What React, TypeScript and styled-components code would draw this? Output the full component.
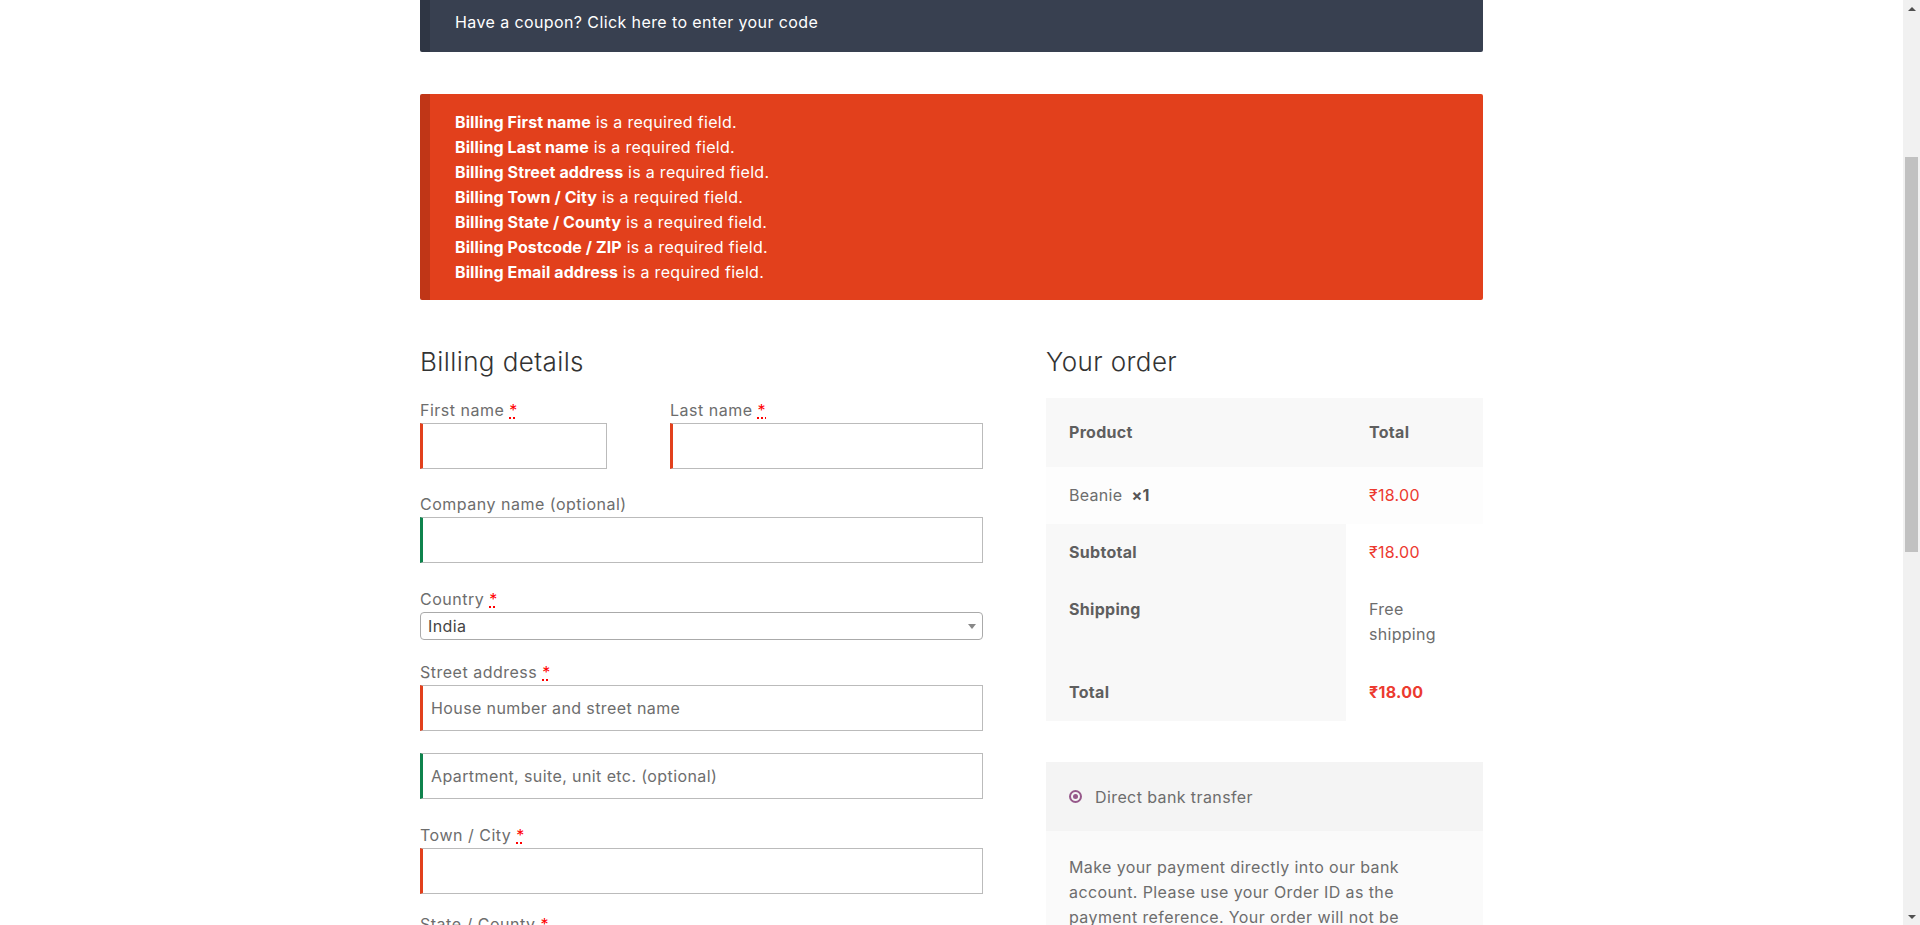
import React from "react";
import styled, { createGlobalStyle } from "styled-components";

const FONT = `"Inter", "Noto Sans", sans-serif`;

const Global = createGlobalStyle`
  html, body { margin: 0; padding: 0; height: 100%; overflow: hidden; background: #fff; }
  body { font-family: ${FONT}; color: #6d6d6d; -webkit-font-smoothing: antialiased; }
  * { box-sizing: border-box; }
`;

const Shell = styled.div`
  display: flex;
  height: 925px;
  overflow: hidden;
`;

const Viewport = styled.div`
  flex: 1;
  overflow: hidden;
`;

const Container = styled.div`
  width: 1063px;
  margin: 0 auto;
`;

const Notice = styled.div<{ $bg: string }>`
  background: ${(p) => p.$bg};
  border-left: 10px solid rgba(0, 0, 0, 0.15);
  border-radius: 0 0 2px 2px;
  color: #fff;
  font-size: 16px;
  letter-spacing: 0.4px;
  line-height: 25px;
  padding: 10px 25px 17px 25px;
`;

const ErrorNotice = styled(Notice)`
  margin-top: 42px;
  border-radius: 2px;
  padding: 16px 25px 15px 25px;
  letter-spacing: 0.3px;
`;

const ErrorLine = styled.div`
  b { font-weight: 700; letter-spacing: 0.1px; }
`;

const Columns = styled.div`
  display: grid;
  grid-template-columns: 563px 1fr;
  column-gap: 63px;
  margin-top: 45px;
`;

const Heading = styled.h3`
  margin: 0 0 19px 0;
  font-size: 26px;
  line-height: 34px;
  font-weight: 300;
  letter-spacing: 0.4px;
  color: #333;
`;

const Row = styled.div<{ $mb?: number }>`
  display: flex;
  flex-direction: column;
  margin-bottom: ${(p) => (p.$mb ?? 22)}px;
`;

const SplitRow = styled.div`
  display: grid;
  grid-template-columns: 187px 1fr;
  column-gap: 63px;
`;

const Label = styled.label`
  font-size: 16px;
  letter-spacing: 0.5px;
  line-height: 24px;
  color: #6d6d6d;
  margin-bottom: 1px;
`;

const Req = styled.abbr`
  color: #ff0000;
  margin-left: 5px;
  text-decoration: underline dotted;
  text-decoration-thickness: 2px;
  border: none;
  cursor: help;
`;

const Input = styled.input<{ $state: "invalid" | "valid" }>`
  width: 100%;
  height: 46px;
  border: 1px solid #bbb;
  border-left: 3px solid ${(p) => (p.$state === "invalid" ? "#e2401c" : "#0f834d")};
  padding: 0 8px;
  font-family: ${FONT};
  font-size: 16px;
  letter-spacing: 0.4px;
  color: #444;
  background: #fff;
  outline: none;
  &::placeholder { color: #6d6d6d; }
`;

const SelectBox = styled.div`
  position: relative;
  height: 28px;
  border: 1px solid #aaa;
  border-radius: 4px;
  padding-left: 7px;
  font-size: 16px;
  letter-spacing: 0.4px;
  line-height: 26px;
  color: #444;
  background: #fff;
  &::after {
    content: "";
    position: absolute;
    right: 6px;
    top: 11px;
    border-left: 4px solid transparent;
    border-right: 4px solid transparent;
    border-top: 5px solid #888;
  }
`;

const Table = styled.table`
  width: 100%;
  margin-top: 2px;
  border-collapse: collapse;
  font-size: 16px;
  letter-spacing: 0.3px;
  line-height: 25px;
`;

const Th = styled.th<{ $bg?: string; $pad?: string; $w?: string }>`
  text-align: left;
  font-weight: 700;
  color: #5f5f5f;
  background: ${(p) => p.$bg ?? "#f8f8f8"};
  padding: ${(p) => p.$pad ?? "16px 23px"};
  vertical-align: top;
  width: ${(p) => p.$w ?? "auto"};
`;

const Td = styled.td<{ $bg?: string; $pad?: string; $color?: string; $bold?: boolean }>`
  text-align: left;
  color: ${(p) => p.$color ?? "#6d6d6d"};
  font-weight: ${(p) => (p.$bold ? 700 : 400)};
  background: ${(p) => p.$bg ?? "#fff"};
  padding: ${(p) => p.$pad ?? "16px 23px"};
  vertical-align: top;
`;

const Qty = styled.strong`
  font-weight: 700;
  color: #555;
  margin-left: 9px;
`;

const Payment = styled.div`
  margin-top: 41px;
  background: #fafafa;
`;

const PaymentHead = styled.div`
  display: flex;
  align-items: center;
  gap: 13px;
  height: 69px;
  padding: 0 23px;
  background: #f4f4f4;
  font-size: 16px;
  letter-spacing: 0.4px;
  color: #6d6d6d;
`;

const Radio = styled.span`
  width: 13px;
  height: 13px;
  border-radius: 50%;
  border: 2px solid #96588a;
  display: flex;
  align-items: center;
  justify-content: center;
  &::after {
    content: "";
    width: 5px;
    height: 5px;
    border-radius: 50%;
    background: #96588a;
  }
`;

const PaymentDesc = styled.div`
  padding: 24px 23px;
  font-size: 16px;
  letter-spacing: 0.4px;
  line-height: 25px;
  color: #6d6d6d;
`;

const Scrollbar = styled.div`
  width: 17px;
  height: 925px;
  background: #f1f1f1;
  display: flex;
  flex-direction: column;
  align-items: center;
`;

const Arrow = styled.div<{ $dir: "up" | "down" }>`
  height: 17px;
  width: 17px;
  display: flex;
  align-items: center;
  justify-content: center;
  &::after {
    content: "";
    border-left: 4px solid transparent;
    border-right: 4px solid transparent;
    ${(p) => (p.$dir === "up" ? "border-bottom: 4px solid #505050;" : "border-top: 4px solid #505050;")}
  }
`;

const TrackGap = styled.div<{ $h?: number }>`
  ${(p) => (p.$h ? `height: ${p.$h}px;` : "flex: 1;")}
`;

const Thumb = styled.div`
  width: 13px;
  height: 395px;
  background: #c1c1c1;
`;

const Field = ({
  label,
  req,
  placeholder,
  state,
  mb,
}: {
  label?: string;
  req?: boolean;
  placeholder?: string;
  state: "invalid" | "valid";
  mb?: number;
}) => (
  <Row $mb={mb}>
    {label && (
      <Label>
        {label}
        {req && <Req title="required">*</Req>}
      </Label>
    )}
    <Input $state={state} placeholder={placeholder} />
  </Row>
);

const errors = [
  "First name",
  "Last name",
  "Street address",
  "Town / City",
  "State / County",
  "Postcode / ZIP",
  "Email address",
];

export default function App() {
  return (
    <>
      <Global />
      <Shell>
        <Viewport>
          <Container>
            <Notice $bg="#384050">Have a coupon? Click here to enter your code</Notice>
            <ErrorNotice $bg="#e2401c">
              {errors.map((e) => (
                <ErrorLine key={e}>
                  <b>Billing {e}</b> is a required field.
                </ErrorLine>
              ))}
            </ErrorNotice>
            <Columns>
              <div>
                <Heading>Billing details</Heading>
                <SplitRow>
                  <Field label="First name" req state="invalid" mb={23} />
                  <Field label="Last name" req state="invalid" mb={23} />
                </SplitRow>
                <Field label="Company name (optional)" state="valid" mb={24} />
                <Row $mb={20}>
                  <Label>
                    Country<Req title="required">*</Req>
                  </Label>
                  <SelectBox>India</SelectBox>
                </Row>
                <Field label="Street address" req placeholder="House number and street name" state="invalid" />
                <Field placeholder="Apartment, suite, unit etc. (optional)" state="valid" mb={24} />
                <Field label="Town / City" req state="invalid" mb={18} />
                <Field label="State / County" req state="invalid" />
                <Field label="Postcode / ZIP" req state="invalid" />
                <Field label="Phone (optional)" state="valid" />
                <Field label="Email address" req state="invalid" />
              </div>
              <div>
                <Heading>Your order</Heading>
                <Table>
                  <thead>
                    <tr>
                      <Th $pad="22px 23px" $w="300px">Product</Th>
                      <Th $pad="22px 23px">Total</Th>
                    </tr>
                  </thead>
                  <tbody>
                    <tr>
                      <Td $bg="#fdfdfd">
                        Beanie<Qty>×1</Qty>
                      </Td>
                      <Td $bg="#fdfdfd" $color="#ec3a30">₹18.00</Td>
                    </tr>
                  </tbody>
                  <tfoot>
                    <tr>
                      <Th $pad="16px 23px 15px">Subtotal</Th>
                      <Td $pad="16px 23px 15px" $color="#ec3a30">₹18.00</Td>
                    </tr>
                    <tr>
                      <Th $pad="17px 23px 16px">Shipping</Th>
                      <Td $pad="17px 23px 16px">
                        Free
                        <br />
                        shipping
                      </Td>
                    </tr>
                    <tr>
                      <Th $pad="17px 23px 16px">Total</Th>
                      <Td $pad="17px 23px 16px" $color="#ec3a30" $bold>₹18.00</Td>
                    </tr>
                  </tfoot>
                </Table>
                <Payment>
                  <PaymentHead>
                    <Radio />
                    Direct bank transfer
                  </PaymentHead>
                  <PaymentDesc>
                    Make your payment directly into our bank
                    <br />
                    account. Please use your Order ID as the
                    <br />
                    payment reference. Your order will not be
                    <br />
                    shipped until the funds have cleared in our
                    <br />
                    account.
                  </PaymentDesc>
                </Payment>
              </div>
            </Columns>
          </Container>
        </Viewport>
        <Scrollbar>
          <Arrow $dir="up" />
          <TrackGap $h={140} />
          <Thumb />
          <TrackGap />
          <Arrow $dir="down" />
        </Scrollbar>
      </Shell>
    </>
  );
}
